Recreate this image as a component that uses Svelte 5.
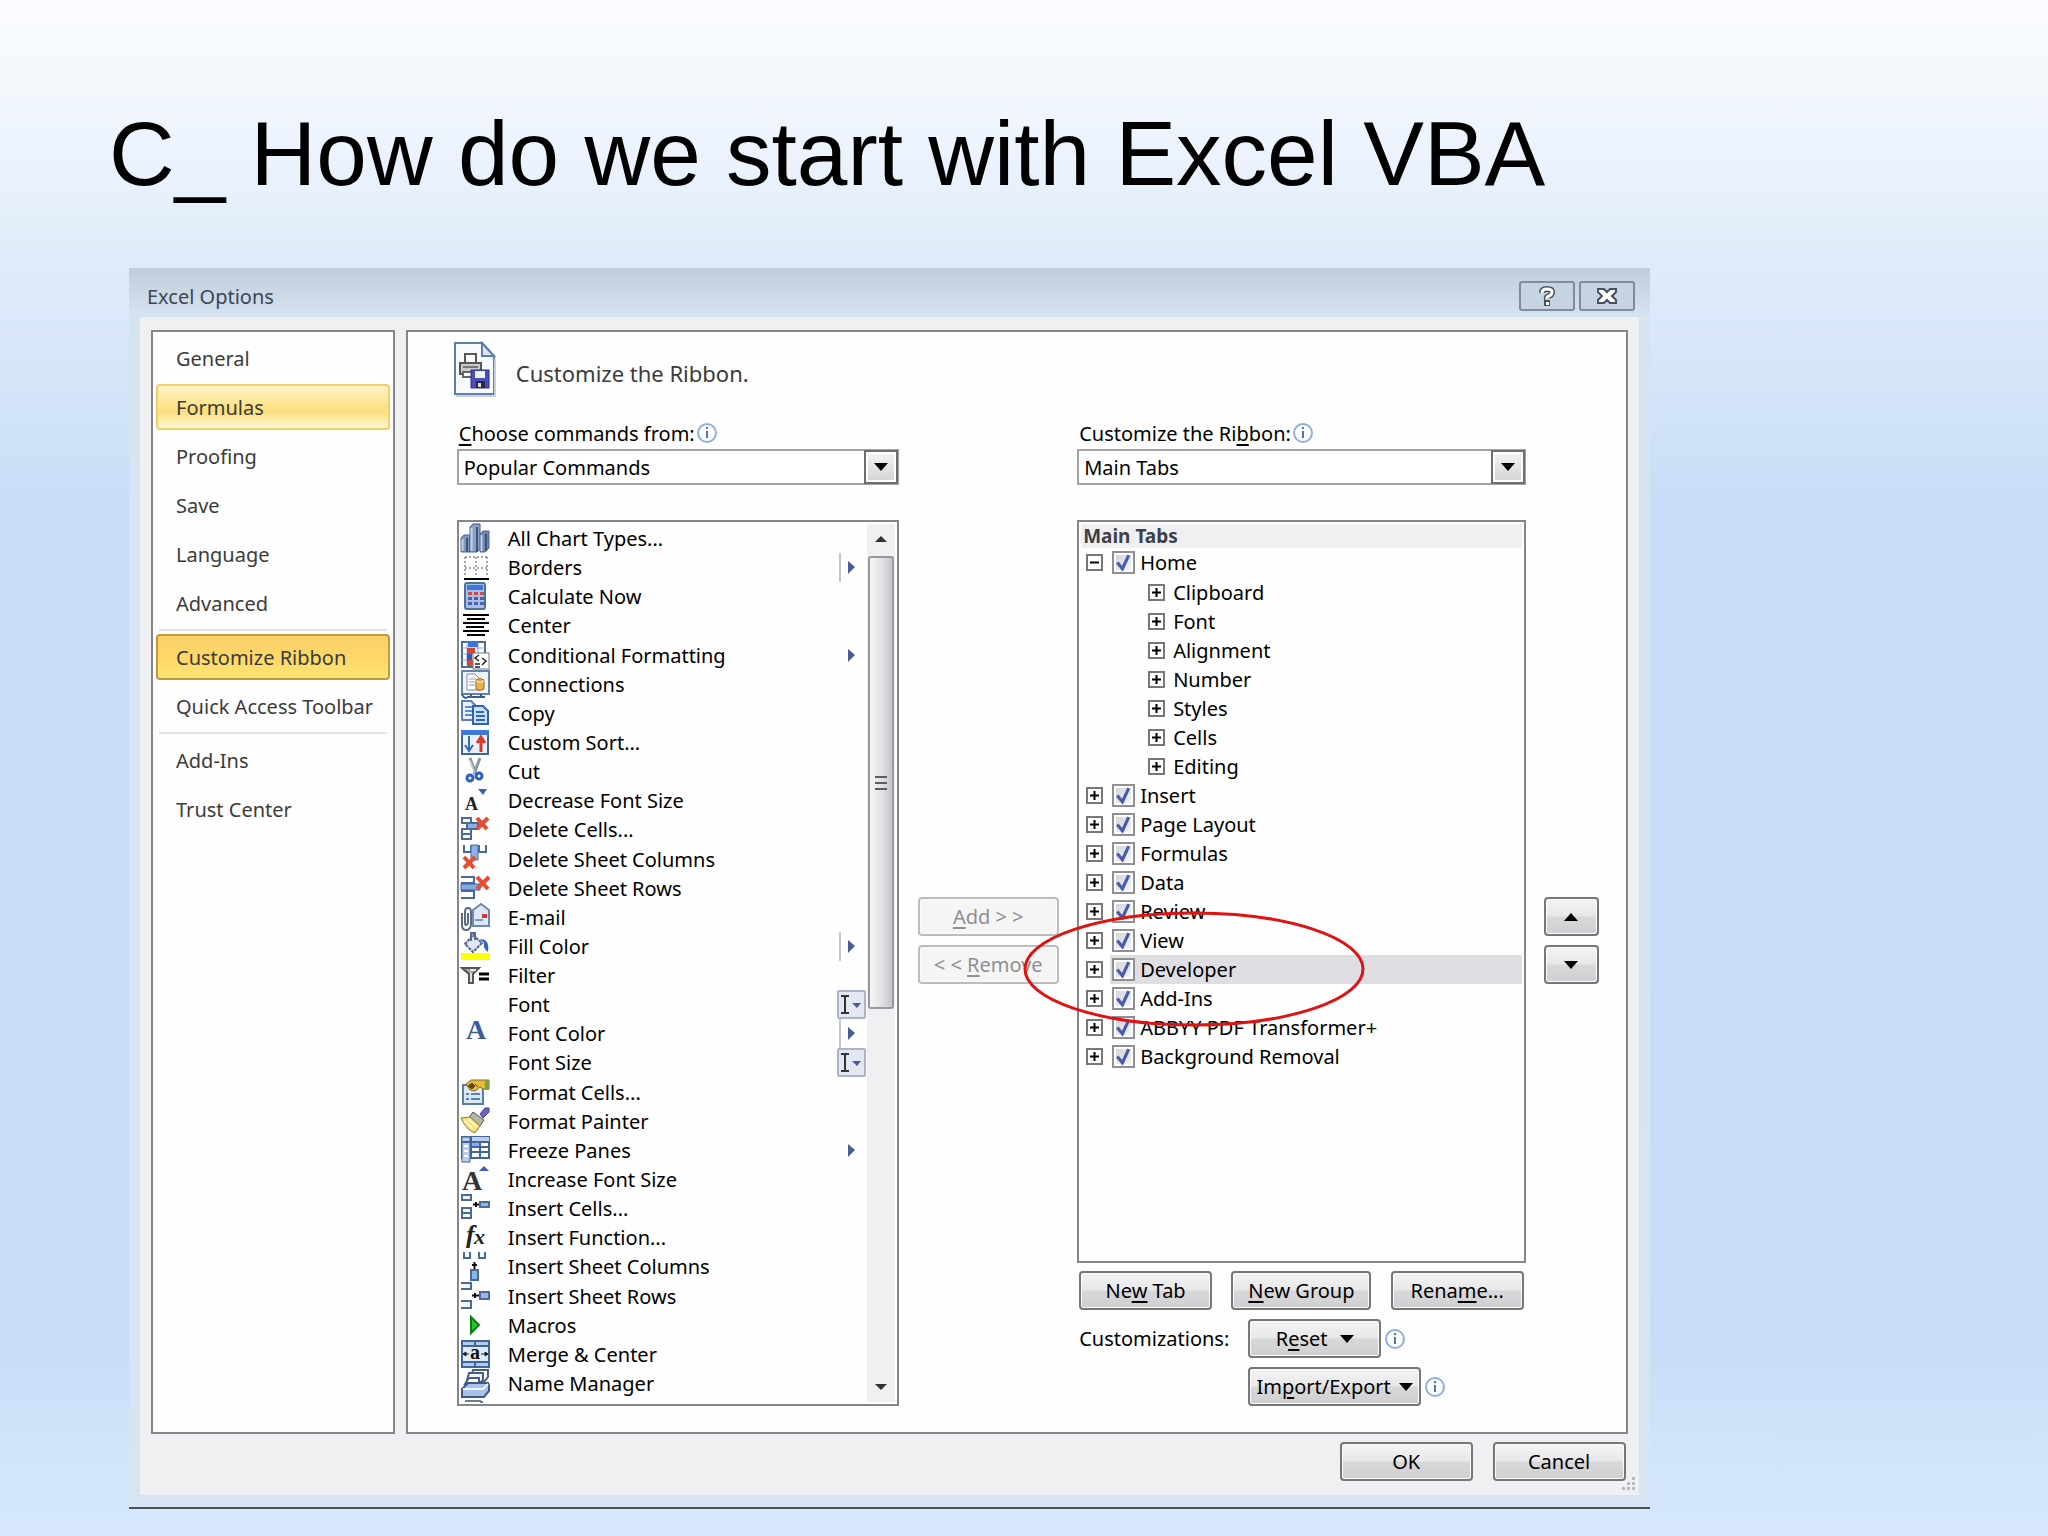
<script>
  const B = '#4c6a96';
  const icons = {
    chart: `<path d="M0 14l3-3h6v17H0z" fill="#7f97bf" stroke="#4d6590"/><path d="M19 10l3-3h6v17l-4 4h-5z" fill="#7087b2" stroke="#4d6590"/><path d="M9 3l3-3h7v25l-3 3H9z" fill="#8ba2c8" stroke="#43597f"/><path d="M16 3v25M6 14v14M25 10v17" stroke="#3f5378" stroke-width="2"/><path d="M10.500 4v23M20.500 11v16M1.500 15v12" stroke="#c3d2ea" stroke-width="2"/>`,
    borders: `<path d="M4 4h23M4 15h23M4 4v20M15 4v20M26 4v20" stroke="#555" stroke-width="1" stroke-dasharray="2 2"/><path d="M3 26h25" stroke="#000" stroke-width="2"/>`,
    calc: `<rect x="4" y="1" width="20" height="26" rx="2" fill="#a9c0e6" stroke="#50709c" stroke-width="2"/><rect x="6" y="3" width="16" height="5" fill="#3f78d8"/><path d="M7 11.500h16" stroke="#d04a4a" stroke-width="3" stroke-dasharray="4 2"/><path d="M7 16.500h16M7 21.500h16" stroke="#4d5fa8" stroke-width="3" stroke-dasharray="4 2"/>`,
    center: `<path d="M2 4h26M6 8h18M2 12h26M5 16h18M2 20h26M6 24h18" stroke="#000" stroke-width="2"/>`,
    cond: `<rect x="1" y="1" width="23" height="25" fill="#fff" stroke="${B}" stroke-width="2"/><path d="M6 1v25M17 1v25M1 7h23M1 13h23M1 19h23" stroke="#8ea9d4"/><rect x="7" y="1" width="10" height="5" fill="#3a74dc"/><rect x="6" y="7" width="8" height="6" fill="#d8452f"/><rect x="6" y="13" width="5" height="6" fill="#2c5cc0"/><rect x="6" y="19" width="7" height="6" fill="#d8452f"/><rect x="12" y="12" width="16" height="16" fill="#fff" stroke="#777"/><path d="M18 14l-4 3 4 3M21 17l4 3-4 4M14 23h5M14 26h5" fill="none" stroke="#222" stroke-width="1.500"/>`,
    connections: `<rect x="1" y="1" width="27" height="23" fill="#eef4fc" stroke="#6483ab" stroke-width="2"/><path d="M6 4h8l4 4v12H6z" fill="#fff" stroke="#7d8ba0"/><path d="M8 9h7M8 12h6M8 15h6" stroke="#8aa0c0"/><path d="M15 10q4-3 8 0v9q-4 3-8 0z" fill="#e9b04b" stroke="#9a6d1d"/><path d="M15 11q4 3 8 0" fill="none" stroke="#fff0c8"/><path d="M1 24q1 4 5 4M6 27h18M10 24v3M20 24v3" stroke="#3f5d85" stroke-width="2" fill="none"/>`,
    copy: `<path d="M1 2h9l5 5v14H1z" fill="#e8f0fc" stroke="#5c7fb8" stroke-width="2"/><path d="M4 8h7M4 12h7M4 16h7" stroke="#5a8ad8" stroke-width="2"/><path d="M12 7h10l5 5v13H12z" fill="#cfe0fa" stroke="#2f5fc0" stroke-width="2"/><path d="M15 13h8M15 17h9M15 21h9" stroke="#2e62cc" stroke-width="2"/>`,
    sort: `<rect x="1" y="3" width="26" height="23" fill="#e9f1fd" stroke="#41659a" stroke-width="2"/><rect x="0" y="2" width="28" height="5" fill="#3d78dc"/><path d="M8 8v15M4 17l4 6 4-6" fill="none" stroke="#3566c0" stroke-width="2"/><path d="M20 24V9M16 15l4-6 4 6" fill="#e0432c" stroke="#d63c28" stroke-width="3"/>`,
    cut: `<path d="M9 1l6 16M19 1l-6 16" stroke="#8b97a8" stroke-width="3"/><path d="M9 3l5 13" stroke="#d5dbe4"/><circle cx="9" cy="21" r="3" fill="#fff" stroke="#2f5fc4" stroke-width="3"/><circle cx="18" cy="19" r="3" fill="#fff" stroke="#2f5fc4" stroke-width="3"/>`,
    decfont: `<text x="4" y="24" font-family="Liberation Serif, serif" font-weight="bold" font-size="18" fill="#222">A</text><path d="M17 3h9l-4 6z" fill="#3c5fb4"/>`,
    delcells: `<path d="M1 3h9v5H1zM1 14h9v5H1zM1 19h9v5H1z" fill="#fff" stroke="${B}" stroke-width="2"/><path d="M6 8h11v6H6z" fill="#8fb0e0" stroke="${B}" stroke-width="2"/><path d="M16 3l10 11M27 3L16 14" stroke="#ea4a2e" stroke-width="4"/>`,
    delcols: `<path d="M3 0v7h7V0M25 0v7h-7V0" fill="#fff" stroke="${B}" stroke-width="2"/><path d="M10 0h7v15h-7z" fill="#8fb0e8" stroke="${B}"/><path d="M3 12l10 11M14 12L3 23" stroke="#ea4a2e" stroke-width="4"/>`,
    delrows: `<path d="M0 3h13v6H0M0 17h13v7H0" fill="#fff" stroke="${B}" stroke-width="2"/><path d="M0 10h19v6H0z" fill="#86a9e4" stroke="#3e62a4"/><path d="M16 3l11 12M28 3L16 15" stroke="#ea4a2e" stroke-width="4"/>`,
    email: `<path d="M12 7l8-6 8 6v16H12z" fill="#dce7f7" stroke="#6c87b0" stroke-width="2"/><path d="M14 17h8" stroke="#7d97bd" stroke-width="2"/><rect x="21" y="11" width="5" height="4" fill="#d8382c"/><path d="M1 10v12q0 5 4 5t5-5V9q0-4-3-4T4 9v11q0 2 1 2t2-2V10" fill="none" stroke="#5b6b7f" stroke-width="2"/>`,
    fill: `<path d="M12 3l9 8-9 9-8-8z" fill="#dfe8f6" stroke="#49618c" stroke-width="2" stroke-dasharray="3 1"/><path d="M10 9V1h4v7" fill="none" stroke="#5a6c88" stroke-width="2"/><path d="M19 7q10 0 8 13q-5-3-4-9z" fill="#3a64b8"/><rect x="0" y="21" width="29" height="7" fill="#ff0"/>`,
    filter: `<path d="M1 7h17l-6 6v9H8v-9z" fill="#a8a8a8" stroke="#555" stroke-width="2"/><path d="M9 9h6M10 12v9" stroke="#e4e4e4" stroke-width="2"/><path d="M18 13h10M18 18h10" stroke="#000" stroke-width="3"/>`,
    none: ``,
    fontcolor: `<text x="5" y="20" font-family="Liberation Serif, serif" font-weight="bold" font-size="28" fill="#3b5c98">A</text>`,
    fmtcells: `<rect x="2" y="7" width="20" height="19" fill="#dbe8f8" stroke="#5d7da8" stroke-width="2"/><path d="M5 16h3M10 16h9M5 21h3M10 21h9" stroke="#5b80b4" stroke-width="2"/><path d="M5 6l5-4h18v9h-6l-3-2-5 4-5-1z" fill="#e3bb3d" stroke="#8a6a16"/><path d="M24 2h4v10h-4z" fill="#7aa048"/><path d="M7 8l4-3 3 3-3 3zM14 6l3 3" fill="#5f4a16" stroke="#5f4a16"/>`,
    painter: `<path d="M19 7l5-6h4v4l-6 6z" fill="#6d62c8" stroke="#463e92"/><path d="M12 5l11 8-4 6-11-8z" fill="#b5b5ae" stroke="#55554f"/><path d="M0 11l9-1 10 9-5 7q-9-3-14-15z" fill="#efdc7c" stroke="#8f7b2c"/><path d="M3 13l9 9M7 12l9 8" stroke="#fff6c0" stroke-width="2"/>`,
    freeze: `<rect x="1" y="1" width="27" height="21" fill="#fff" stroke="#41659a" stroke-width="2"/><rect x="1" y="1" width="27" height="5" fill="#bcd0ee"/><rect x="1" y="1" width="8" height="25" fill="#bcd0ee" stroke="#41659a"/><path d="M10 1v21M19 6v16M1 6h27M10 11h18M10 16h18" stroke="#41659a" stroke-width="2"/><path d="M3 10h4M3 15h4M3 20h4" stroke="#fff" stroke-width="2"/><rect x="11" y="7" width="7" height="3" fill="#8eb0e8"/>`,
    incfont: `<text x="1" y="25" font-family="Liberation Serif, serif" font-weight="bold" font-size="28" fill="#333">A</text><path d="M18 6h10l-5-5z" fill="#3c5fb4"/>`,
    inscells: `<path d="M1 1h9v5H1zM1 14h9v5H1zM1 19h9v5H1z" fill="#f3f8ff" stroke="${B}" stroke-width="2"/><path d="M19 8h9v5h-9z" fill="#8ab6ec" stroke="${B}" stroke-width="2"/><path d="M12 10.500h6M15 8v5" stroke="#111" stroke-width="2"/>`,
    fx: `<text x="5" y="20" font-family="Liberation Serif, serif" font-weight="bold" font-style="italic" font-size="26" fill="#222">f</text><text x="13" y="21" font-family="Liberation Serif, serif" font-weight="bold" font-style="italic" font-size="22" fill="#222">x</text>`,
    inscols: `<path d="M3 0v6h6V0M18 0v6h6V0" fill="#f3f8ff" stroke="${B}" stroke-width="2"/><path d="M10 18h7v10h-7z" fill="#8ab6ec" stroke="${B}" stroke-width="2"/><path d="M13.500 17v-7M11 13h5" stroke="#111" stroke-width="2"/>`,
    insrows: `<path d="M0 1h10v6H0M0 19h10v7H0" fill="#f3f8ff" stroke="${B}" stroke-width="2"/><path d="M19 10h9v7h-9z" fill="#9db4f0" stroke="${B}" stroke-width="2"/><path d="M11 13.500h7M14 11v5" stroke="#111" stroke-width="2"/>`,
    macro: `<path d="M10 6l8 8-8 8z" fill="#2fc42f" stroke="#0c7d14" stroke-width="2"/>`,
    merge: `<rect x="1" y="1" width="27" height="26" fill="#b5cbea" stroke="#41659a" stroke-width="2"/><path d="M1 6h27M1 22h27M14 1v5M14 22v5" stroke="#41659a" stroke-width="2"/><rect x="2" y="7" width="25" height="14" fill="#dfeafa"/><text x="9" y="19" font-family="Liberation Serif, serif" font-weight="bold" font-size="20" fill="#111">a</text><path d="M2 14h6M20 14h7M5 12l-3 2 3 2zM24 12l3 2-3 2z" stroke="#222"/>`,
    name: `<path d="M12 1h15v7l-4 5H8z" fill="#fff" stroke="#4a5f80" stroke-width="2"/><path d="M8 4h14v7l-4 4H5z" fill="#f2f6fc" stroke="#4a5f80" stroke-width="2"/><path d="M8 9h10v6H4z" fill="#fff" stroke="#4a5f80" stroke-width="2"/><path d="M1 20l6-6h20l1 2v6l-5 6H1z" fill="#a9c2e8" stroke="#41597f" stroke-width="2"/><path d="M2 20h20l5-5" fill="none" stroke="#eaf2ff" stroke-width="2"/><path d="M4 32h16M19 33h3" stroke="#6a7c98" stroke-width="2"/>`,
  };

  // extra: "split" = divider and flyout arrow, "menu" = flyout arrow, "combo" = editable drop-down
  const commands = [
    ['All Chart Types...', 'chart'],
    ['Borders', 'borders', 'split'],
    ['Calculate Now', 'calc'],
    ['Center', 'center'],
    ['Conditional Formatting', 'cond', 'menu'],
    ['Connections', 'connections'],
    ['Copy', 'copy'],
    ['Custom Sort...', 'sort'],
    ['Cut', 'cut'],
    ['Decrease Font Size', 'decfont'],
    ['Delete Cells...', 'delcells'],
    ['Delete Sheet Columns', 'delcols'],
    ['Delete Sheet Rows', 'delrows'],
    ['E-mail', 'email'],
    ['Fill Color', 'fill', 'split'],
    ['Filter', 'filter'],
    ['Font', 'none', 'combo'],
    ['Font Color', 'fontcolor', 'split'],
    ['Font Size', 'none', 'combo'],
    ['Format Cells...', 'fmtcells'],
    ['Format Painter', 'painter'],
    ['Freeze Panes', 'freeze', 'menu'],
    ['Increase Font Size', 'incfont'],
    ['Insert Cells...', 'inscells'],
    ['Insert Function...', 'fx'],
    ['Insert Sheet Columns', 'inscols'],
    ['Insert Sheet Rows', 'insrows'],
    ['Macros', 'macro'],
    ['Merge & Center', 'merge'],
    ['Name Manager', 'name'],
  ];

  const pages = [
    { name: 'General' },
    { name: 'Formulas', state: 'hover' },
    { name: 'Proofing' },
    { name: 'Save' },
    { name: 'Language' },
    { name: 'Advanced', last: true },
    { name: 'Customize Ribbon', state: 'current' },
    { name: 'Quick Access Toolbar', last: true },
    { name: 'Add-Ins' },
    { name: 'Trust Center' },
  ];

  const tabs = [
    { name: 'Home', groups: ['Clipboard', 'Font', 'Alignment', 'Number', 'Styles', 'Cells', 'Editing'] },
    { name: 'Insert' },
    { name: 'Page Layout' },
    { name: 'Formulas' },
    { name: 'Data' },
    { name: 'Review' },
    { name: 'View' },
    { name: 'Developer', selected: true },
    { name: 'Add-Ins' },
    { name: 'ABBYY PDF Transformer+' },
    { name: 'Background Removal' },
  ];
</script>

{#snippet info()}
  <svg class="info" viewBox="0 0 20 20" aria-hidden="true">
    <circle cx="10" cy="10" r="9" fill="#fbfdff" stroke="#8fb0dc" stroke-width="2" />
    <path d="M10 8v7" stroke="#4a78c0" stroke-width="2" />
    <path d="M10 4v2" stroke="#4a78c0" stroke-width="2" />
  </svg>
{/snippet}

{#snippet expander(open, name)}
  <button class="expander" type="button" aria-expanded={open} aria-label={'Toggle ' + name}>
    <svg viewBox="0 0 13 13" aria-hidden="true">
      <path d={open ? 'M2 6.500h9' : 'M2 6.500h9M6.500 2v9'} stroke="#000" stroke-width="2" />
    </svg>
  </button>
{/snippet}

<main class="slide">
  <h1>C_ How do we start with Excel VBA</h1>

  <section class="dialog" aria-label="Excel Options">
    <header class="titlebar">
      <span>Excel Options</span>
      <div class="window-buttons">
        <button type="button" aria-label="Help">
          <svg viewBox="0 0 20 22" aria-hidden="true">
            <path d="M5 8q0-4 5-4t5 3q0 3-3 4t-2 3" fill="none" stroke="#47525f" stroke-width="6" />
            <path d="M7 15h6v6H7z" fill="#47525f" />
            <path d="M5 8q0-4 5-4t5 3q0 3-3 4t-2 3" fill="none" stroke="#fff" stroke-width="3" />
            <path d="M9 17h3v3H9z" fill="#fff" />
          </svg>
        </button>
        <button type="button" aria-label="Close">
          <svg viewBox="0 0 20 22" aria-hidden="true">
            <path d="M1 4h6l3 3 3-3h6v3l-4 4 4 4v3h-6l-3-3-3 3H1v-3l4-4-4-4z" fill="#fff" stroke="#47525f" stroke-width="2" />
          </svg>
        </button>
      </div>
    </header>

    <div class="client">
      <div class="panes">
        <nav class="sidebar" aria-label="Option pages">
          {#each pages as page}
            <button type="button" class="page {page.state ?? ''}">{page.name}</button>
            {#if page.last}<hr />{/if}
          {/each}
        </nav>

        <div class="content">
          <div class="heading">
            <svg viewBox="0 0 42 56" aria-hidden="true">
              <path d="M1 2h27l12 13v38H1z" fill="#f7faff" stroke="#5f7da6" stroke-width="2" />
              <path d="M28 2v13h12z" fill="#dce6f4" stroke="#5f7da6" stroke-width="2" />
              <path d="M2 55h39V18" fill="none" stroke="#c9d0da" stroke-width="2" />
              <path d="M11 13h11v9H11z" fill="#fff" stroke="#555" stroke-width="2" />
              <path d="M6 22h21v11H6z" fill="#c9c9cb" stroke="#555" stroke-width="2" />
              <path d="M9 26h15" stroke="#777" stroke-width="2" />
              <path d="M9 31h10v5H9z" fill="#fff" stroke="#666" stroke-width="2" />
              <path d="M17 29h18v18H17z" fill="#4a4fb8" stroke="#2c2f86" />
              <path d="M21 30h10v7H21z" fill="#eef1ff" />
              <path d="M22 40h9v7h-9z" fill="#23264e" />
              <path d="M24 42h3v4h-3z" fill="#dfe2c8" />
            </svg>
            <h2>Customize the Ribbon.</h2>
          </div>

          <div class="columns">
            <div class="commands">
              <div class="caption">
                <label for="source"><u>C</u>hoose commands from:</label>{@render info()}
              </div>
              <div class="combo">
                <select id="source"><option>Popular Commands</option></select>
                <span class="drop"><svg viewBox="0 0 14 8" aria-hidden="true"><path d="M0 0h14L7 8z" /></svg></span>
              </div>
              <div class="list">
                <ul>
                  {#each commands as [name, icon, extra]}
                    <li>
                      <svg class="glyph" viewBox="0 0 29 29" aria-hidden="true">{@html icons[icon]}</svg>
                      <span>{name}</span>
                      {#if extra === 'combo'}
                        <svg class="extra" viewBox="0 0 29 29" aria-hidden="true">
                          <rect x="1" y="1" width="27" height="27" rx="1" fill="#e3e8f2" stroke="#aab4c4" stroke-width="2" />
                          <path d="M4 6h3l1 1 1-1h3M8 7v15M4 23h3l1-1 1 1h3" fill="none" stroke="#333" stroke-width="2" />
                          <path d="M15 13h9l-4 5z" fill="#4a5c94" />
                        </svg>
                      {:else if extra}
                        <svg class="extra" viewBox="0 0 29 29" aria-hidden="true">
                          {#if extra === 'split'}<path d="M3 0v29" stroke="#8b8f98" stroke-width="1" />{/if}
                          <path d="M11 8l7 6-7 7z" fill="#4a5c94" />
                        </svg>
                      {/if}
                    </li>
                  {/each}
                </ul>
                <div class="scrollbar">
                  <svg viewBox="0 0 12 6" aria-hidden="true"><path d="M0 6h12L6 0z" fill="#333" /></svg>
                  <div class="thumb"><i></i><i></i><i></i></div>
                  <svg class="down" viewBox="0 0 12 6" aria-hidden="true"><path d="M0 0h12L6 6z" fill="#333" /></svg>
                </div>
              </div>
            </div>

            <div class="transfer">
              <button type="button" class="btn" disabled><span><u>A</u>dd &gt; &gt;</span></button>
              <button type="button" class="btn" disabled><span>&lt; &lt; <u>R</u>emove</span></button>
            </div>

            <div class="ribbon">
              <div class="caption">
                <label for="target">Customize the Ri<u>b</u>bon:</label>{@render info()}
              </div>
              <div class="combo">
                <select id="target"><option>Main Tabs</option></select>
                <span class="drop"><svg viewBox="0 0 14 8" aria-hidden="true"><path d="M0 0h14L7 8z" /></svg></span>
              </div>
              <div class="tree">
                <h3>Main Tabs</h3>
                <ul>
                  {#each tabs as tab}
                    <li>
                      <div class="node">
                        {@render expander(!!tab.groups, tab.name)}
                        <label class="tab" class:selected={tab.selected}>
                          <span class="check">
                            <input type="checkbox" checked />
                            <svg viewBox="0 0 22 22" aria-hidden="true"><path d="M5 11l5 6 6-13" fill="none" stroke="#4a5ca8" stroke-width="3" /></svg>
                          </span>
                          {tab.name}
                        </label>
                      </div>
                      {#if tab.groups}
                        <ul class="groups">
                          {#each tab.groups as group}
                            <li class="node">{@render expander(false, group)}<span>{group}</span></li>
                          {/each}
                        </ul>
                      {/if}
                    </li>
                  {/each}
                </ul>
                <svg class="marker" viewBox="0 0 342 116" aria-hidden="true">
                  <ellipse cx="171" cy="58" rx="169" ry="56" fill="none" stroke="#e01212" stroke-width="3" />
                </svg>
              </div>
              <div class="tab-actions">
                <button type="button" class="btn"><span>Ne<u>w</u> Tab</span></button>
                <button type="button" class="btn wide"><span><u>N</u>ew Group</span></button>
                <button type="button" class="btn"><span>Rena<u>m</u>e...</span></button>
              </div>
              <div class="custom">
                <span>Customizations:</span>
                <div class="custom-actions">
                  <div class="action">
                    <button type="button" class="btn"><span>R<u>e</u>set</span><svg viewBox="0 0 14 8" aria-hidden="true"><path d="M0 0h14L7 8z" /></svg></button>
                    {@render info()}
                  </div>
                  <div class="action">
                    <button type="button" class="btn long"><span>Im<u>p</u>ort/Export</span><svg viewBox="0 0 14 8" aria-hidden="true"><path d="M0 0h14L7 8z" /></svg></button>
                    {@render info()}
                  </div>
                </div>
              </div>
            </div>

            <div class="order">
              <button type="button" class="btn" aria-label="Move up"><svg viewBox="0 0 14 8" aria-hidden="true"><path d="M0 8h14L7 0z" /></svg></button>
              <button type="button" class="btn" aria-label="Move down"><svg viewBox="0 0 14 8" aria-hidden="true"><path d="M0 0h14L7 8z" /></svg></button>
            </div>
          </div>
        </div>
      </div>

      <footer>
        <button type="button" class="btn">OK</button>
        <button type="button" class="btn">Cancel</button>
        <svg class="grip" viewBox="0 0 14 14" aria-hidden="true">
          <path d="M10 0h3v3h-3zM5 5h3v3H5zM10 5h3v3h-3zM0 10h3v3H0zM5 10h3v3H5zM10 10h3v3h-3z" fill="#b9b9bd" />
        </svg>
      </footer>
    </div>
  </section>
</main>

<style>
  :global(body) {
    margin: 0;
  }
  .slide {
    box-sizing: border-box;
    min-height: 100vh;
    padding: 97px 0 27px;
    background: linear-gradient(#fbfcff 0%, #f3f8fc 5%, #eef4fe 9%, #dfebf9 17%, #d6e6fa 24%, #c7ddf7 33%, #c7ddf7 87%, #cde3fa 93%, #d7e8fd 100%);
    color: #000;
    font-family: 'Noto Sans', 'Open Sans', sans-serif;
    font-size: 20px;
    line-height: 29px;
  }
  h1 {
    margin: 0 0 57px 109px;
    font: 400 91px/114px 'Liberation Sans', Arial, sans-serif;
  }
  h2,
  h3,
  ul {
    margin: 0;
    padding: 0;
    list-style: none;
  }
  button,
  select {
    font: inherit;
    color: inherit;
  }
  u {
    text-underline-offset: 3px;
  }
  .dialog {
    box-sizing: border-box;
    width: 74.25%;
    margin-left: 129px;
    padding: 0 11px 12px;
    border-bottom: 2px solid #4a5257;
    background: linear-gradient(#c0ccda, #d6e4f2 50px, #d7e4f1);
  }
  .titlebar {
    display: flex;
    align-items: center;
    justify-content: space-between;
    height: 49px;
    padding: 0 4px 0 7px;
    color: #3c4654;
  }
  .titlebar span {
    padding-top: 8px;
  }
  .window-buttons {
    display: flex;
    gap: 4px;
    padding-top: 6px;
  }
  .window-buttons button {
    display: grid;
    place-items: center;
    width: 56px;
    height: 30px;
    padding: 0;
    border: 2px solid #7d8c9f;
    border-radius: 3px;
    background: #c6d3e1;
  }
  .window-buttons svg {
    width: 20px;
    height: 22px;
  }
  .client {
    padding: 13px 11px 0;
    background: #f0eff1;
  }
  .panes {
    display: grid;
    grid-template-columns: 244fr 1223fr;
    gap: 11px;
  }
  .sidebar,
  .content {
    border: 2px solid #85858a;
    background: #fefefe;
  }
  .sidebar {
    display: flex;
    flex-direction: column;
    gap: 3px;
    padding: 3px;
  }
  .page {
    box-sizing: border-box;
    height: 46px;
    padding: 1px 0 0 18px;
    border: 2px solid transparent;
    border-radius: 4px;
    background: none;
    color: #3b3b3b;
    text-align: left;
  }
  .page.hover {
    border-color: #f1cf66;
    background: linear-gradient(#fff2c8, #fde58e 45%, #fbdf7c 60%, #fff6d4);
  }
  .page.current {
    border-color: #c29a3c;
    background: linear-gradient(#fbd068, #fdd768 50%, #fee573);
  }
  hr {
    width: 228px;
    height: 2px;
    margin: 0 auto;
    border: 0;
    background: #e2e3e6;
  }
  .content {
    padding: 9px 27px 26px 46px;
  }
  .heading {
    display: flex;
    gap: 20px;
    height: 56px;
  }
  .heading svg {
    width: 42px;
    height: 56px;
  }
  h2 {
    padding-top: 16px;
    color: #3b3b3b;
    font-size: 22px;
    font-weight: 400;
    line-height: 32px;
  }
  .columns {
    display: grid;
    grid-template-columns: 443fr 178fr 449fr 73fr;
    padding: 20px 0 0 3px;
  }
  .commands,
  .ribbon {
    display: flex;
    flex-direction: column;
  }
  .caption {
    display: flex;
    align-items: center;
    gap: 2px;
    height: 32px;
    padding-left: 2px;
  }
  .info {
    width: 20px;
    height: 20px;
  }
  .combo {
    position: relative;
    height: 36px;
    margin-bottom: 35px;
  }
  .combo select {
    box-sizing: border-box;
    width: 100%;
    height: 36px;
    padding: 0 40px 0 5px;
    border: 2px solid #a3a3a8;
    border-radius: 0;
    background: #fff;
    appearance: none;
  }
  .drop {
    position: absolute;
    top: 1px;
    right: 1px;
    display: grid;
    place-items: center;
    box-sizing: border-box;
    width: 34px;
    height: 34px;
    border: 2px solid #6d6d72;
    background: linear-gradient(#f4f4f5, #d3d3d6);
    box-shadow: inset 0 0 0 2px #fff;
    pointer-events: none;
  }
  .drop svg,
  .btn svg {
    width: 14px;
    height: 8px;
  }
  .list {
    box-sizing: border-box;
    display: flex;
    height: 886px;
    border: 2px solid #85858a;
    background: #fefefe;
  }
  .list ul {
    flex: 1;
    display: grid;
    grid-auto-rows: 1fr;
    padding: 2px 0 6px 2px;
  }
  .list li {
    display: flex;
    align-items: center;
  }
  .list li span {
    flex: 1;
    padding-left: 18px;
  }
  .glyph,
  .extra {
    width: 29px;
    height: 29px;
    overflow: visible;
  }
  .scrollbar {
    display: flex;
    flex-direction: column;
    align-items: center;
    width: 28px;
    margin: 2px 2px 2px 1px;
    background: #f0eff1;
  }
  .scrollbar svg {
    width: 12px;
    height: 6px;
    padding: 12px 0 14px;
  }
  .scrollbar .down {
    margin-top: auto;
    padding: 0 0 12px;
  }
  .thumb {
    box-sizing: border-box;
    display: flex;
    flex-direction: column;
    align-items: center;
    justify-content: center;
    gap: 4px;
    width: 26px;
    height: 453px;
    border: 2px solid #98989c;
    border-radius: 3px;
    background: linear-gradient(90deg, #f6f6f7, #e3e3e6 50%, #c6c6ca);
  }
  .thumb i {
    width: 12px;
    height: 2px;
    background: #5d5d62;
  }
  .btn {
    box-sizing: border-box;
    display: flex;
    align-items: center;
    justify-content: center;
    gap: 12px;
    width: 133px;
    height: 39px;
    padding: 0;
    border: 2px solid #77777b;
    border-radius: 4px;
    background: linear-gradient(#f4f4f5, #e8e8ea 48%, #d8d8da 52%, #d0d0d3);
    box-shadow: inset 0 0 0 1px #fafafa;
    white-space: nowrap;
  }
  .btn:disabled {
    border-color: #bcbcc0;
    background: #f5f5f6;
    color: #8f8f93;
  }
  .transfer,
  .order {
    display: flex;
    flex-direction: column;
    align-items: center;
    gap: 9px;
    padding-top: 480px;
  }
  .transfer .btn {
    width: 141px;
  }
  .order {
    align-items: flex-end;
  }
  .order .btn {
    width: 55px;
  }
  .tree {
    position: relative;
    flex: 1;
    border: 2px solid #85858a;
    background: #fefefe;
  }
  h3 {
    margin: 2px 2px 0;
    padding-left: 2px;
    background: #f0f0f3;
    color: #3f3f46;
    font-size: 19px;
    font-weight: 700;
    line-height: 24px;
  }
  .node {
    display: flex;
    align-items: center;
    height: 29px;
    padding: 0 2px 0 7px;
  }
  .groups {
    margin: 1px 0 0;
    padding-left: 62px;
  }
  .groups span {
    padding-left: 8px;
  }
  .expander {
    box-sizing: border-box;
    display: grid;
    place-items: center;
    width: 17px;
    height: 17px;
    padding: 0;
    border: 2px solid #77777b;
    background: #fff;
  }
  .expander svg {
    width: 13px;
    height: 13px;
  }
  .tab {
    flex: 1;
    display: flex;
    align-items: center;
    gap: 5px;
    margin-left: 7px;
    padding-left: 2px;
  }
  .tab.selected {
    background: #dfdee3;
  }
  .check {
    display: grid;
  }
  .check input,
  .check svg {
    grid-area: 1 / 1;
    box-sizing: border-box;
    width: 23px;
    height: 23px;
    margin: 0;
  }
  .check input {
    border: 2px solid #8f8f94;
    background: linear-gradient(135deg, #cfd2da, #f7f7f9);
    box-shadow: inset 0 0 0 2px #fff;
    appearance: none;
  }
  .check svg {
    pointer-events: none;
  }
  .marker {
    position: absolute;
    top: 389px;
    left: -56px;
    width: 342px;
    height: 116px;
    pointer-events: none;
  }
  .tab-actions {
    display: flex;
    justify-content: space-between;
    padding: 8px 2px 9px;
  }
  .btn.wide {
    width: 140px;
  }
  .btn.long {
    width: 173px;
    gap: 8px;
  }
  .custom {
    display: flex;
    gap: 18px;
    padding-left: 2px;
  }
  .custom > span {
    width: 151px;
    padding-top: 5px;
  }
  .custom-actions {
    display: grid;
    gap: 9px;
  }
  .action {
    display: flex;
    align-items: center;
    gap: 4px;
  }
  footer {
    position: relative;
    display: flex;
    justify-content: flex-end;
    gap: 20px;
    padding: 8px 2px 14px 0;
  }
  .grip {
    position: absolute;
    right: -8px;
    bottom: 4px;
    width: 14px;
    height: 14px;
  }
</style>
